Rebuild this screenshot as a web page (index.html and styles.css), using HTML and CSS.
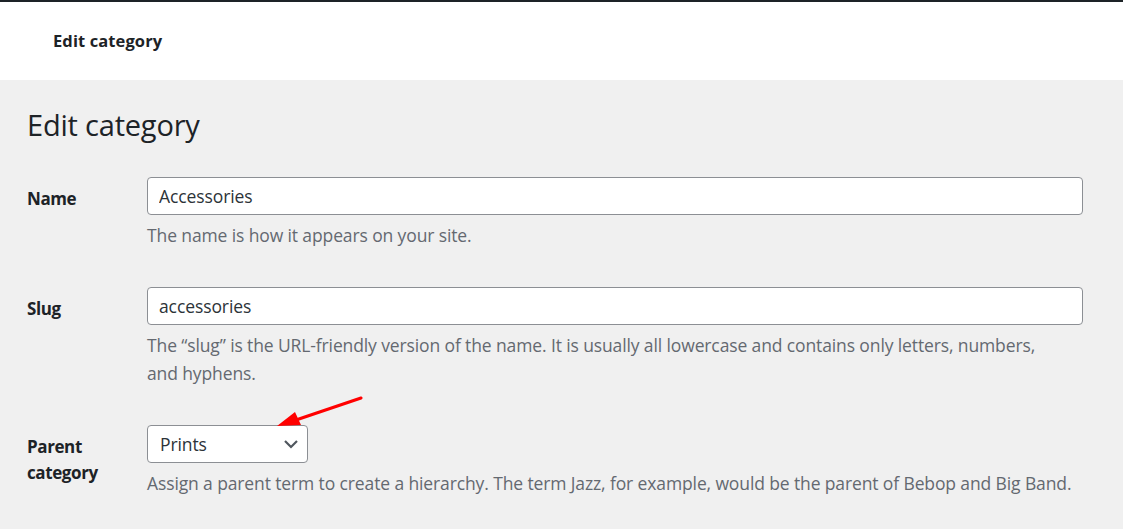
FILE: index.html
```html
<!DOCTYPE html>
<html lang="en">
<head>
<meta charset="utf-8">
<title>Edit category</title>
<link rel="stylesheet" href="styles.css">
</head>
<body>
<header class="topbar">
  <div class="topbar-title">Edit category</div>
</header>
<main class="wrap">
  <h1 class="page-title">Edit category</h1>
  <form class="form-table">
    <div class="row">
      <label class="label" for="name">Name</label>
      <div class="field">
        <input class="input" id="name" type="text" value="Accessories">
        <p class="desc">The name is how it appears on your site.</p>
      </div>
    </div>
    <div class="row">
      <label class="label" for="slug">Slug</label>
      <div class="field">
        <input class="input" id="slug" type="text" value="accessories">
        <p class="desc">The “slug” is the URL-friendly version of the name. It is usually all lowercase and contains only letters, numbers,<br>and hyphens.</p>
      </div>
    </div>
    <div class="row">
      <label class="label" for="parent">Parent<br>category</label>
      <div class="field">
        <div class="select-wrap">
          <div class="select" id="parent">
            <span>Prints</span>
            <svg class="chevron" width="18" height="18" viewBox="0 0 18 18"><path d="M3 6 L9 12 L15 6" fill="none" stroke="#50575e" stroke-width="2.2"/></svg>
          </div>
          <svg class="arrow" width="100" height="40" viewBox="0 0 100 40"><line x1="96" y1="3" x2="28" y2="26" stroke="#ff0000" stroke-width="3" stroke-linecap="round"/><polygon points="12,31 30,17 36,30" fill="#ff0000"/></svg>
        </div>
        <p class="desc">Assign a parent term to create a hierarchy. The term Jazz, for example, would be the parent of Bebop and Big Band.</p>
      </div>
    </div>
  </form>
</main>
</body>
</html>
```

FILE: styles.css
```css
html, body {
  margin: 0;
  padding: 0;
}
body {
  background: #f0f0f0;
  font-family: "Open Sans", "Noto Sans", sans-serif;
  color: #1d2327;
  height: 529px;
  overflow: hidden;
}
.topbar {
  background: #fff;
  border-top: 2px solid #1d2327;
  height: 78px;
  display: flex;
  align-items: center;
  padding-left: 53px;
}
.topbar-title {
  font-weight: 700;
  font-size: 16.5px;
  letter-spacing: 0.1px;
  margin-top: -1px;
}
.wrap {
  padding: 0 40px 0 27px;
}
.page-title {
  margin: 0;
  padding-top: 26px;
  font-size: 29px;
  font-weight: 400;
  line-height: 38px;
  letter-spacing: -0.2px;
}
.form-table {
  display: flex;
  flex-direction: column;
  gap: 38px;
  margin-top: 33px;
}
.row {
  display: grid;
  grid-template-columns: 120px 1fr;
}
.label {
  font-weight: 700;
  font-size: 17px;
  line-height: 26px;
  padding-top: 9px;
  letter-spacing: -0.4px;
}
.field {
  display: flex;
  flex-direction: column;
  align-items: flex-start;
}
.input {
  box-sizing: border-box;
  width: 100%;
  height: 38px;
  border: 1px solid #8c8f94;
  border-radius: 4px;
  background: #fff;
  padding: 0 11px;
  font-family: inherit;
  font-size: 17.5px;
  letter-spacing: -0.1px;
  color: #2c3338;
  margin: 0;
}
.desc {
  margin: 6px 0 0;
  font-size: 17.5px;
  line-height: 28px;
  color: #646970;
  letter-spacing: -0.12px;
}
.select-wrap {
  position: relative;
}
.select {
  box-sizing: border-box;
  width: 161px;
  height: 38px;
  border: 1px solid #8c8f94;
  border-radius: 4px;
  background: #fff;
  display: flex;
  align-items: center;
  justify-content: space-between;
  padding: 0 7px 0 12px;
  font-size: 17.5px;
  letter-spacing: -0.1px;
  color: #2c3338;
}
.chevron {
  display: block;
}
.arrow {
  position: absolute;
  left: 118px;
  top: -30px;
}
```
